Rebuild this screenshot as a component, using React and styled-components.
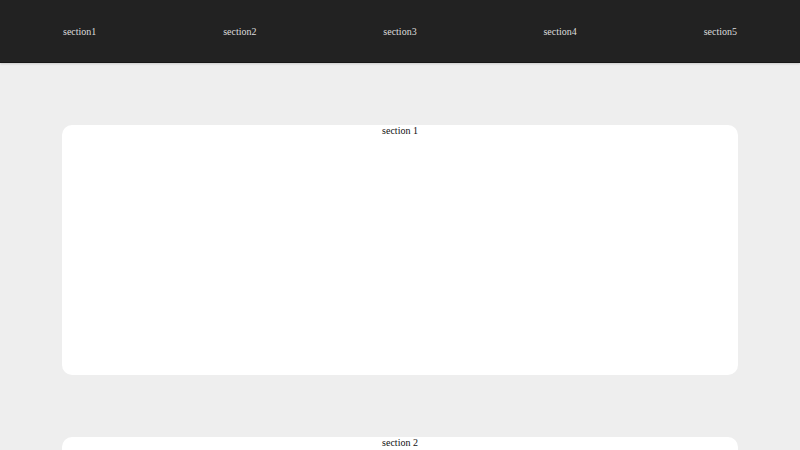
import React from 'react'
import styled, { createGlobalStyle } from 'styled-components'

const Global = createGlobalStyle`
  body {
    margin: 0;
    background: #eeeeee;
    font-family: "Liberation Serif", "Times New Roman", serif;
    font-size: 10px;
  }
`

const Nav = styled.nav`
  height: 62px;
  background-color: #222222;
  border-bottom: 1px solid #161616;
  box-shadow: 0 1px 2px rgba(0, 0, 0, 0.15);
  padding: 0 63px;
  display: flex;
  align-items: center;
`

const Ul = styled.ul`
  flex: 1;
  display: flex;
  justify-content: space-between;
  list-style: none;
  margin: 0;
  padding: 0;
`

const Item = styled.li`
  a {
    color: #dddddd;
    text-decoration: none;
  }
`

const Main = styled.main`
  padding: 62px 62px 0;
  display: flex;
  flex-direction: column;
  gap: 62px;
`

const Section = styled.section`
  height: 250px;
  background: #ffffff;
  border-radius: 10px;
  text-align: center;
  color: #111111;
  line-height: 11px;
`

const sections = [1, 2, 3, 4, 5]

const App = () => {
  return (
    <>
      <Global />
      <Nav>
        <Ul>
          {sections.map(n => (
            <Item key={n}><a href={`#section${n}`}>section{n}</a></Item>
          ))}
        </Ul>
      </Nav>
      <Main>
        {sections.map(n => (
          <Section key={n} id={`section${n}`}>section {n}</Section>
        ))}
      </Main>
    </>
  )
}

export default App
